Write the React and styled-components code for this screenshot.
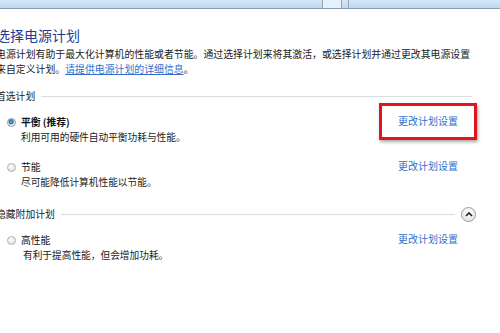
import React from "react";
import styled, { createGlobalStyle } from "styled-components";

const Global = createGlobalStyle`
  html, body { margin: 0; padding: 0; background: #ffffff; }
  body {
    width: 500px; height: 333px; overflow: hidden;
    font-family: "Noto Sans CJK SC", "Noto Sans", sans-serif;
    color: #1b1b1b;
  }
`;

const Page = styled.div`
  position: relative;
  width: 500px;
  height: 333px;
  overflow: hidden;
  background: #fff;
`;

const TopBar = styled.div`
  height: 8px;
  border-bottom: 1px solid #8d9cab;
  background: linear-gradient(#d3e6f8, #bcd8f3);
  display: flex;
  padding-left: 322px;
`;

const BarSeg = styled.div`
  width: ${(p) => p.w}px;
  height: 8px;
  border-left: 1px solid #9aa6b2;
  background: ${(p) => (p.light ? "#e6f0fa" : "transparent")};
`;

const Content = styled.div`
  margin-left: -4px;
  padding-right: 28px;
  padding-top: 17px;
`;

const Title = styled.h1`
  margin: 0;
  font-size: 14px;
  line-height: 18px;
  font-weight: 400;
  color: #1e3a8f;
`;

const Desc = styled.p`
  margin: 3px 0 0;
  font-size: 9.9px;
  line-height: 15px;
  color: #222;
  white-space: pre-line;
`;

const Link = styled.a`
  color: #2f6fcc;
  text-decoration: ${(p) => (p.underline ? "underline" : "none")};
  cursor: pointer;
`;

const SectionHeader = styled.div`
  display: flex;
  align-items: center;
  gap: 6px;
  height: 14px;
  margin-top: ${(p) => p.mt}px;
  font-size: 9.8px;
  color: #222;
`;

const Rule = styled.div`
  flex: 1;
  height: 1px;
  background: #d6dde3;
`;

const Collapse = styled.div`
  width: 13px;
  height: 13px;
  border-radius: 50%;
  border: 1px solid #9c9c9c;
  background: radial-gradient(circle at 50% 35%, #ffffff, #dcdcdc);
  display: flex;
  align-items: center;
  justify-content: center;
  margin-left: 0;
  margin-right: -4px;
`;

const Plans = styled.div`
  display: flex;
  flex-direction: column;
  gap: 16px;
  padding-right: 14px;
  margin-top: ${(p) => p.mt}px;
`;

const PlanRow = styled.div`
  display: grid;
  grid-template-columns: 25px 1fr auto;
  grid-template-rows: 14px 15px;
  align-items: center;
`;

const Radio = styled.span`
  justify-self: center;
  margin-left: 6px;
  width: 9px;
  height: 9px;
  box-sizing: border-box;
  border-radius: 50%;
  border: 1px solid ${(p) => (p.checked ? "#7f98ad" : "#b0b0b0")};
  background: ${(p) =>
    p.checked
      ? "radial-gradient(circle at 45% 40%, #6fb6e0 0, #2a6f9c 2.2px, #e9eef2 3px, #f6f6f6 4px)"
      : "radial-gradient(circle at 40% 35%, #ffffff, #d9d9d9)"};
`;

const PlanName = styled.span`
  font-size: 9.8px;
  font-weight: ${(p) => (p.bold ? 700 : 400)};
  color: #111;
`;

const PlanDesc = styled.span`
  grid-column: 2;
  font-size: 9.7px;
  color: #222;
  padding-left: ${(p) => p.indent || 0}px;
`;

const PlanLink = styled(Link)`
  font-size: 10px;
  margin-top: -3px;
`;

const Highlight = styled.div`
  position: absolute;
  left: 379px;
  top: 103px;
  width: 98px;
  height: 37px;
  box-sizing: border-box;
  border: 3px solid #e0161c;
  box-shadow: 1px 2px 3px rgba(60, 60, 60, 0.45);
`;

const Chevron = () => (
  <svg width="8" height="6" viewBox="0 0 8 6">
    <path d="M1 5 L4 2 L7 5" fill="none" stroke="#222" strokeWidth="1.6" />
  </svg>
);

const Plan = ({ checked, bold, name, desc, indent }) => (
  <PlanRow>
    <Radio checked={checked} />
    <PlanName bold={bold}>{name}</PlanName>
    <PlanLink>更改计划设置</PlanLink>
    <PlanDesc indent={indent}>{desc}</PlanDesc>
  </PlanRow>
);

export default function App() {
  return (
    <Page>
      <Global />
      <TopBar>
        <BarSeg w={18} light />
        <BarSeg w={6} />
        <BarSeg w={1} />
      </TopBar>
      <Content>
        <Title>选择电源计划</Title>
        <Desc>
          电源计划有助于最大化计算机的性能或者节能。通过选择计划来将其激活，或选择计划并通过更改其电源设置
          {"\n"}来自定义计划。<Link underline>请提供电源计划的详细信息</Link>。
        </Desc>
        <SectionHeader mt={12}>
          首选计划
          <Rule />
        </SectionHeader>
        <Plans mt={12}>
          <Plan checked bold name="平衡 (推荐)" desc="利用可用的硬件自动平衡功耗与性能。" />
          <Plan name="节能" desc="尽可能降低计算机性能以节能。" />
        </Plans>
        <SectionHeader mt={18}>
          隐藏附加计划
          <Rule />
          <Collapse>
            <Chevron />
          </Collapse>
        </SectionHeader>
        <Plans mt={12}>
          <Plan name="高性能" desc="有利于提高性能，但会增加功耗。" indent={2} />
        </Plans>
      </Content>
      <Highlight />
    </Page>
  );
}
